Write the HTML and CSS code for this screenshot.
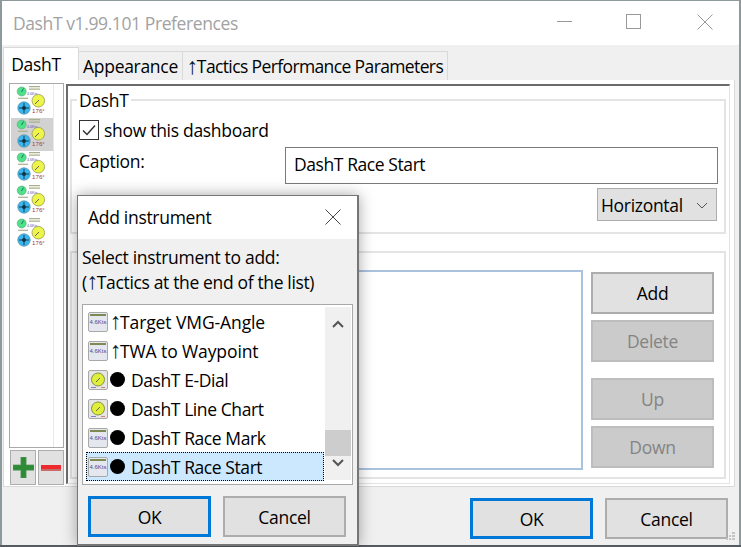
FILE: index.html
```html
<!DOCTYPE html>
<html lang="en">
<head>
<meta charset="utf-8">
<title>DashT Preferences</title>
<link rel="stylesheet" href="styles.css">
</head>
<body>
<svg class="defs" width="0" height="0" aria-hidden="true">
  <defs>
    <symbol id="dash" viewBox="0 0 42 33">
      <circle cx="10.700" cy="6.500" r="4.500" fill="#4fe08a" stroke="#5aa878" stroke-width=".6"/>
      <path d="M10.500 7l2-3.500" stroke="#176" stroke-width="1"/>
      <path d="M18 1.700h11M18 4.200h11" stroke="#a9b08a" stroke-width="1.200"/>
      <text x="16" y="9.800" class="tiny-blue">4.6Kts</text>
      <path d="M7 13.300h10" stroke="#a9b08a" stroke-width="1.200"/>
      <circle cx="27.300" cy="15.700" r="6.300" fill="#eef54a" stroke="#8a8c50" stroke-width=".7"/>
      <path d="M24 19l4-4" stroke="#555" stroke-width=".9"/>
      <circle cx="13" cy="23" r="6.200" fill="#3cb6ef" stroke="#4a86a8" stroke-width=".7"/>
      <path d="M13 18v10M8 23h10" stroke="#134" stroke-width=".9"/>
      <circle cx="13" cy="23" r="2" fill="#134"/>
      <text x="21" y="27.500" class="tiny-red">176°</text>
    </symbol>
    <symbol id="kts" viewBox="0 0 20 20">
      <rect x=".5" y=".5" width="19" height="19" rx="1.500" fill="#e4e8ee" stroke="#a8a8a8"/>
      <rect x="2" y="2" width="16" height="2" fill="#7e8a52"/>
      <text x="10" y="12" text-anchor="middle" class="kts-text">4.6Kts</text>
    </symbol>
    <symbol id="dial" viewBox="0 0 20 20">
      <rect x=".5" y=".5" width="19" height="19" rx="1.500" fill="#e6e6e6" stroke="#a8a8a8"/>
      <circle cx="10" cy="9.500" r="6.500" fill="#dfee3a" stroke="#6f7a30" stroke-width=".8"/>
      <path d="M8 12l4-4" stroke="#444" stroke-width=".8"/>
      <path d="M3 17.500h5" stroke="#66c" stroke-width=".8"/>
      <path d="M13 17.500h4" stroke="#c66" stroke-width=".8"/>
    </symbol>
  </defs>
</svg>

<main class="window">
  <header class="titlebar">
    <h1 class="title">DashT v1.99.101 Preferences</h1>
    <div class="win-controls">
      <svg class="win-icon win-min" viewBox="0 0 16 16"><path d="M0 7.500h15" stroke="#999" fill="none"/></svg>
      <svg class="win-icon" viewBox="0 0 16 16"><rect x=".5" y=".5" width="14" height="14" stroke="#999" fill="none"/></svg>
      <svg class="win-icon" viewBox="0 0 16 16"><path d="M.5.500l15 15M15.500.500l-15 15" stroke="#999" fill="none"/></svg>
    </div>
  </header>

  <div class="body">
    <nav class="tabs">
      <span class="tab tab-active">DashT</span>
      <span class="tab tab-app">Appearance</span>
      <span class="tab tab-tac"><span class="arrow">↑</span>Tactics Performance Parameters</span>
    </nav>

    <section class="panel">
      <aside class="side">
        <ul class="dash-list">
          <li class="dash-item"><svg class="dash-icon"><use href="#dash"/></svg></li>
          <li class="dash-item dash-selected"><svg class="dash-icon"><use href="#dash"/></svg></li>
          <li class="dash-item"><svg class="dash-icon"><use href="#dash"/></svg></li>
          <li class="dash-item"><svg class="dash-icon"><use href="#dash"/></svg></li>
          <li class="dash-item"><svg class="dash-icon"><use href="#dash"/></svg></li>
        </ul>
        <div class="side-buttons">
          <button class="icon-btn" aria-label="Add dashboard">
            <svg viewBox="0 0 20 20" class="pm"><path d="M7.500 0h5v7.500H20v5h-7.500V20h-5v-7.500H0v-5h7.500z" fill="#2d8a35" stroke="#5d9a63" stroke-width=".6"/></svg>
          </button>
          <button class="icon-btn" aria-label="Remove dashboard">
            <svg viewBox="0 0 20 6" class="pm-minus"><rect width="20" height="6" fill="#ee2a2e"/><rect y="4" width="20" height="2" fill="#c96a6a"/></svg>
          </button>
        </div>
      </aside>

      <div class="detail">
        <fieldset class="group group-top">
          <legend class="legend">DashT</legend>
          <label class="check-row">
            <span class="checkbox"><svg viewBox="0 0 14 14" class="tick"><path d="M1 7.500l4 4L13 2.500" stroke="#333" stroke-width="1.500" fill="none"/></svg></span>
            show this dashboard
          </label>
          <div class="caption-row">
            <span class="caption-label">Caption:</span>
            <div class="text-input">DashT Race Start</div>
          </div>
          <div class="select-row">
            <div class="select">Horizontal
              <svg class="chev" viewBox="0 0 12 7"><path d="M1 1l5 5 5-5" stroke="#555" fill="none"/></svg>
            </div>
          </div>
        </fieldset>

        <section class="group group-bottom">
          <div class="instrument-list"></div>
          <div class="action-buttons">
            <button class="btn btn-side">Add</button>
            <button class="btn btn-side btn-off">Delete</button>
            <button class="btn btn-side btn-off btn-gap">Up</button>
            <button class="btn btn-side btn-off">Down</button>
          </div>
        </section>
      </div>
    </section>

    <footer class="footer">
      <button class="btn btn-dlg btn-default">OK</button>
      <button class="btn btn-dlg">Cancel</button>
      <svg class="grip" viewBox="0 0 9 9"><path d="M6 0h3v2H6zM3 3h2v2H3zM6 3h3v2H6zM0 6h2v2H0zM3 6h2v2H3zM6 6h3v2H6z" fill="#c4c4c4"/></svg>
    </footer>
  </div>

  <div class="dialog">
    <header class="dlg-title">
      <span>Add instrument</span>
      <svg class="dlg-x" viewBox="0 0 16 16"><path d="M.5.500l15 15M15.500.500l-15 15" stroke="#444" fill="none"/></svg>
    </header>
    <div class="dlg-body">
      <p class="dlg-text">Select instrument to add:<br><span class="dlg-note">(<span class="arrow">↑</span>Tactics at the end of the list)</span></p>
      <div class="dlg-list">
        <ul class="rows">
          <li class="row"><svg class="row-icon"><use href="#kts"/></svg><span class="arrow-name"><span class="arrow">↑</span>Target VMG-Angle</span></li>
          <li class="row"><svg class="row-icon"><use href="#kts"/></svg><span class="arrow-name"><span class="arrow">↑</span>TWA to Waypoint</span></li>
          <li class="row"><svg class="row-icon"><use href="#dial"/></svg><i class="dot"></i><span>DashT E-Dial</span></li>
          <li class="row"><svg class="row-icon"><use href="#dial"/></svg><i class="dot"></i><span>DashT Line Chart</span></li>
          <li class="row"><svg class="row-icon"><use href="#kts"/></svg><i class="dot"></i><span>DashT Race Mark</span></li>
          <li class="row row-selected"><svg class="row-icon"><use href="#kts"/></svg><i class="dot"></i><span>DashT Race Start</span></li>
        </ul>
        <div class="scrollbar">
          <svg class="scroll-arrow" viewBox="0 0 12 8"><path d="M1 7l5-5 5 5" stroke="#555" stroke-width="2" fill="none"/></svg>
          <div class="thumb"></div>
          <svg class="scroll-arrow" viewBox="0 0 12 8"><path d="M1 1l5 5 5-5" stroke="#555" stroke-width="2" fill="none"/></svg>
        </div>
      </div>
      <div class="dlg-buttons">
        <button class="btn btn-dlg btn-default">OK</button>
        <button class="btn btn-dlg">Cancel</button>
      </div>
    </div>
  </div>
</main>
</body>
</html>
```

FILE: styles.css
```css
* { box-sizing: border-box; }
html, body { margin: 0; padding: 0; }
body {
  width: 741px;
  height: 547px;
  overflow: hidden;
  background: #555b60;
  font-family: "Open Sans", "Liberation Sans", sans-serif;
  font-size: 17.5px;
  letter-spacing: -.3px;
  color: #000;
}
.defs { position: absolute; }
ul { list-style: none; margin: 0; padding: 0; }
button { font: inherit; color: inherit; padding: 0; letter-spacing: inherit; }
.arrow {
  display: inline-block;
  width: 10px;
  font-family: "Liberation Sans", sans-serif;
  font-size: 23px;
  line-height: 1;
  letter-spacing: 0;
  text-align: center;
  color: #0a1a30;
}

.window {
  position: relative;
  width: 741px;
  height: 545px;
  background: #f0f0f0;
  border: 1px solid #8d9a9c;
  border-width: 1px 2px 0 2px;
  display: flex;
  flex-direction: column;
}
.titlebar {
  height: 44px;
  flex: none;
  background: #fff;
  display: flex;
  align-items: center;
  justify-content: space-between;
  padding: 0 26px 0 11px;
}
.title { margin: 0; font-size: 17.5px; font-weight: 400; color: #a2a2a2; letter-spacing: -.4px; }
.win-controls { display: flex; gap: 55px; margin-top: -2px; }
.win-icon { width: 16px; height: 16px; display: block; }
.win-min { margin-right: -2px; }

.body { flex: 1; display: flex; flex-direction: column; }
.tabs { display: flex; height: 35px; padding: 2px 0 0 1px; align-items: flex-end; white-space: nowrap; }
.tab {
  height: 29px;
  background: #f0f0f0;
  border: 1px solid #d9d9d9;
  border-bottom: 0;
  display: flex;
  align-items: center;
  justify-content: center;
}
.tab-active { width: 76px; height: 33px; background: #fff; padding: 0 10px 1px 0; }
.tab-app { width: 104px; border-left: 0; }
.tab-tac { width: 265px; border-left: 0; letter-spacing: -.62px; }

.panel {
  width: 732px;
  height: 407px;
  margin-left: 1px;
  background: #fff;
  border: 1px solid #d9d9d9;
  border-top: 0;
  display: flex;
  padding: 3px 4px 0 5px;
}
.side { width: 56px; flex: none; display: flex; flex-direction: column; gap: 2px; }
.dash-list {
  height: 365px;
  width: 55px;
  border: 1px solid #a9a9a9;
  background: linear-gradient(to right, #fff 43px, #dfeaf8 43px, #dfeaf8 44px, #fff 44px);
  padding: 1px 0 0 1px;
}
.dash-item { width: 42px; height: 33px; }
.dash-selected { background: #d2d2d2; }
.dash-icon { width: 42px; height: 33px; display: block; }
.tiny-blue { font-size: 3.600px; fill: #5558b0; font-family: "Liberation Sans", sans-serif; letter-spacing: 0; }
.tiny-red { font-size: 6.200px; fill: #a23c3c; font-family: "Liberation Sans", sans-serif; letter-spacing: 0; }
.kts-text { font-size: 6px; fill: #4a4a9a; font-family: "Liberation Sans", sans-serif; letter-spacing: 0; }

.side-buttons { display: flex; gap: 2px; margin-left: 1px; }
.icon-btn {
  width: 26px;
  height: 35px;
  background: #e1e1e1;
  border: 1px solid #adadad;
  display: flex;
  align-items: center;
  justify-content: center;
}
.pm { width: 21px; height: 21px; display: block; }
.pm-minus { width: 20px; height: 6px; display: block; }

.detail {
  flex: 1;
  margin-left: 1px;
  margin-top: 1px;
  border-left: 2px solid #6b6b6b;
  border-top: 2px solid #6b6b6b;
  border-right: 1px solid #e4e4e4;
  border-bottom: 1px solid #e4e4e4;
  padding: 0 3px 0 2px;
  height: 400px;
  display: flex;
  flex-direction: column;
}
.group { border: 2px solid #e4e4e4; margin: 0; padding: 0; width: 656px; }
.group-top { height: 144px; margin-top: 4px; padding: 0 0 0 7px; min-width: 0; }
.legend { padding: 0 2px; margin-left: -2px; line-height: 20px; }
.check-row { display: flex; align-items: center; gap: 5px; margin-top: 10px; height: 20px; }
.checkbox {
  width: 20px;
  height: 20px;
  border: 1px solid #333;
  display: flex;
  align-items: center;
  justify-content: center;
}
.tick { width: 14px; height: 14px; display: block; }
.caption-row { display: flex; margin-top: 7px; }
.caption-label { width: 206px; line-height: 28px; }
.text-input {
  width: 433px;
  height: 37px;
  border: 1px solid #7a7a7a;
  padding: 0 8px;
  line-height: 33px;
  letter-spacing: -.42px;
}
.select-row { display: flex; justify-content: flex-end; padding-right: 7px; margin-top: 4px; }
.select {
  width: 120px;
  height: 33px;
  background: #e1e1e1;
  border: 1px solid #adadad;
  padding: 2px 3px 0;
  line-height: 31px;
  display: flex;
  justify-content: space-between;
  align-items: center;
}
.chev { width: 12px; height: 7px; margin-right: 5px; display: block; }

.group-bottom {
  height: 228px;
  margin-top: 17px;
  display: flex;
  padding: 17px 10px 0 6px;
}
.instrument-list {
  width: 508px;
  height: 200px;
  background: #fff;
  border: 2px solid #a9c3df;
}
.action-buttons { margin-left: 8px; display: flex; flex-direction: column; gap: 6px; padding-top: 2px; }
.btn { background: #e1e1e1; border: 2px solid #adadad; display: block; }
.btn-side { width: 123px; height: 42px; }
.btn-off { background: #cbcbcb; color: #848484; border-color: #bdbdbd; }
.btn-gap { margin-top: 10px; }

.footer {
  display: flex;
  gap: 12px;
  justify-content: flex-end;
  padding: 11px 11px 0 0;
  position: relative;
}
.btn-dlg { width: 123px; height: 41px; }
.btn-default { border: 3px solid #0078d7; }
.grip { position: absolute; right: 4px; top: 45px; width: 9px; height: 9px; }

.dialog {
  position: absolute;
  left: 75px;
  top: 194px;
  width: 282px;
  height: 351px;
  border: 2px solid #767676;
  border-width: 1px 2px 2px 1px;
  background: #f0f0f0;
  display: flex;
  flex-direction: column;
  box-shadow: 0 0 14px rgba(0, 0, 0, .35);
}
.dlg-title {
  height: 43px;
  flex: none;
  background: #fff;
  display: flex;
  align-items: center;
  justify-content: space-between;
  padding: 0 16px 1px 10px;
}
.dlg-x { width: 16px; height: 16px; display: block; }
.dlg-body { padding: 6px 5px 0 4px; }
.dlg-text { margin: 0; line-height: 25px; }
.dlg-note { letter-spacing: -.35px; }
.dlg-list {
  margin-top: 9px;
  width: 271px;
  height: 181px;
  background: #fff;
  border: 1px solid #a8a8a8;
  display: flex;
  padding: 2px 1px 3px 3px;
}
.rows { width: 238px; flex: none; }
.row { height: 29px; display: flex; align-items: center; padding-left: 2px; white-space: nowrap; letter-spacing: -.42px; }
.row-icon { width: 20px; height: 20px; flex: none; margin-right: 2px; }
.arrow-name { letter-spacing: -.1px; }
.dot { width: 15px; height: 15px; border-radius: 50%; background: #000; margin: 0 6px 0 0; flex: none; }
.row-selected { background: #cce8ff; outline: 1px dotted #000; outline-offset: -1px; }
.scrollbar {
  width: 26px;
  margin-left: 1px;
  background: #f0f0f0;
  display: flex;
  flex-direction: column;
  align-items: center;
  position: relative;
  height: 173px;
  padding: 13px 0;
  justify-content: space-between;
}
.scroll-arrow { width: 12px; height: 8px; display: block; }
.thumb { position: absolute; left: 0; top: 123px; width: 26px; height: 26px; background: #cdcdcd; }
.dlg-buttons { display: flex; gap: 12px; padding: 11px 0 0 6px; }
```
